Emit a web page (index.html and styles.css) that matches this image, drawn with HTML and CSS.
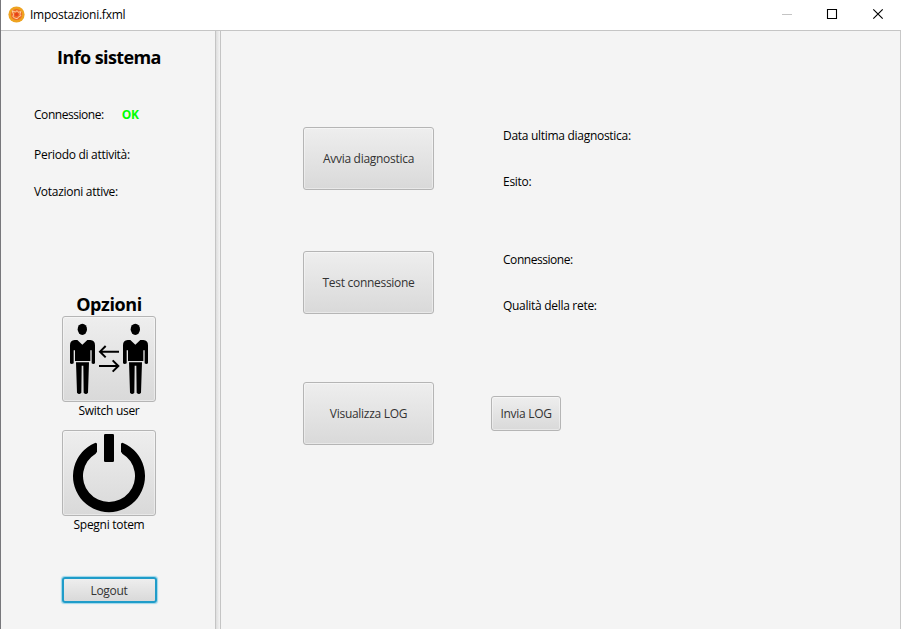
FILE: index.html
```html
<!DOCTYPE html>
<html lang="it">
<head>
<meta charset="utf-8">
<title>Impostazioni.fxml</title>
<link rel="stylesheet" href="styles.css">
</head>
<body>
<div class="window">
  <header class="titlebar">
    <svg class="app-icon" width="17" height="17" viewBox="0 0 17 17">
      <circle cx="8.5" cy="8.5" r="8.1" fill="#eea320"/>
      <circle cx="8.5" cy="8.5" r="5.6" fill="#ef6a24"/>
      <path d="M4.2 4.8l3 1.2 2-1.3 1.2 1.6 2.4-.7-.9 2.6 1 1.5-2.2 1-1.4 2-2.4-.6-2-1.4.6-2.3z" fill="none" stroke="#ffd9b0" stroke-width=".9"/>
      <circle cx="8.5" cy="8.4" r="1.7" fill="#e5401c"/>
    </svg>
    <span class="title">Impostazioni.fxml</span>
    <svg class="controls" width="119" height="30" viewBox="0 0 119 30" fill="none">
      <path d="M0 14.5h10" stroke="#c4c4c4"/>
      <path d="M45.5 9.5h9v9h-9z" stroke="#000" stroke-width="1.1"/>
      <path d="M91.3 9.3l9.4 9.4M100.7 9.3l-9.4 9.4" stroke="#000" stroke-width="1.15"/>
    </svg>
  </header>
  <div class="split">
    <aside class="sidebar">
      <h1 class="heading info-heading">Info sistema</h1>
      <div class="info connection"><span class="conn-label">Connessione:</span><b class="ok">OK</b></div>
      <div class="info activity"><span>Periodo di attività:</span></div>
      <div class="info votes"><span>Votazioni attive:</span></div>
      <h2 class="heading options-heading">Opzioni</h2>
      <button class="button icon-button">
        <svg width="94" height="86" viewBox="36 78 282 258">
          <defs>
            <g id="person">
              <ellipse cx="97" cy="118" rx="14" ry="17"/>
              <path d="M60 220v-54q0-15 14-16h8l15 14 15-14h9q14 1 14 16v54q-5 4-10 0v-39h-4v32H75v-32h-4v39q-6 4-11 0z"/>
              <path d="M78 217h39l-3 91q-6 8-13 0l-1-81h-5l-1 81q-7 8-13 0z"/>
            </g>
          </defs>
          <use href="#person"/>
          <use href="#person" x="159"/>
          <g fill="none" stroke="#000" stroke-width="6">
            <path d="M207 185h-56M167 168l-17 17 17 17"/>
            <path d="M147 228h57M188 211l17 17-17 17"/>
          </g>
        </svg>
      </button>
      <span class="caption">Switch user</span>
      <button class="button icon-button power">
        <svg width="94" height="86" viewBox="36 30 282 258">
          <path d="M135 69Q141 67 141 73V95L137 101A78 78 0 1 0 217 101L213 95V73Q213 67 219 69A108 108 0 1 1 135 69Z"/>
          <rect x="162" y="42" width="30" height="84" rx="4"/>
        </svg>
      </button>
      <span class="caption">Spegni totem</span>
      <button class="button logout">Logout</button>
    </aside>
    <div class="divider"></div>
    <main class="content">
      <section class="row">
        <button class="button action">Avvia diagnostica</button>
        <div class="details"><span>Data ultima diagnostica:</span><span>Esito:</span></div>
      </section>
      <section class="row row-network">
        <button class="button action">Test connessione</button>
        <div class="details"><span class="conn-label">Connessione:</span><span>Qualità della rete:</span></div>
      </section>
      <section class="row row-log">
        <button class="button action">Visualizza LOG</button>
        <button class="button send">Invia LOG</button>
      </section>
    </main>
  </div>
</div>
</body>
</html>
```
FILE: styles.css
```css
* { box-sizing: border-box; }

body {
  margin: 0;
  font: 12px/20px "Open Sans", "Noto Sans", sans-serif;
  letter-spacing: -0.29px;
  color: #000;
  background: #f4f4f4;
}

.window {
  display: flex;
  flex-direction: column;
  width: 901px;
  height: 629px;
  overflow: hidden;
  border-left: 1px solid #77777b;
}

.titlebar {
  display: flex;
  flex: none;
  align-items: center;
  height: 31px;
  padding-left: 7px;
  background: #fff;
  border-bottom: 1px solid #c5c5c5;
}

.app-icon { margin-top: -2px; }
.title { margin-left: 5px; letter-spacing: -0.25px; }
.controls { margin-left: auto; }

.split {
  display: flex;
  flex: 1;
  border-right: 1px solid #c8c8c8;
}

.sidebar {
  display: flex;
  flex-direction: column;
  align-items: center;
  width: 214px;
  padding-left: 2px;
}

.heading {
  margin: 0;
  font-size: 18px;
  line-height: 20px;
  font-weight: 700;
  letter-spacing: -0.6px;
}

.info-heading { margin-top: 16px; }

.info {
  display: flex;
  align-self: stretch;
  height: 20px;
  padding-left: 31px;
}

.conn-label { letter-spacing: -0.45px; }
.connection { margin-top: 38px; }
.activity { margin-top: 20px; }
.votes { margin-top: 17px; }
.ok { margin-left: 18px; color: #0f0; }
.options-heading { margin-top: 92px; letter-spacing: -0.4px; }

.button {
  display: flex;
  flex: none;
  align-items: center;
  justify-content: center;
  padding: 0;
  border: 1px solid #b5b5b5;
  border-radius: 3px;
  background: linear-gradient(#eee, #d9d9d9);
  box-shadow: inset 0 0 0 1px rgba(255, 255, 255, .4);
  color: #333;
  font: inherit;
  letter-spacing: inherit;
}

.icon-button {
  width: 94px;
  height: 86px;
  margin-top: 2px;
}

.icon-button svg { flex: none; }
.caption { height: 18px; line-height: 18px; }
.power { margin-top: 10px; }

.logout {
  width: 95px;
  height: 26px;
  margin-top: 43px;
  padding-top: 1px;
  border: 2px solid #1f9cc9;
  box-shadow: 0 0 1px 0.5px #9bd6ea;
}

.divider {
  width: 6px;
  border: solid #c4c4c4;
  border-width: 0 1px;
  background: linear-gradient(90deg, #ddd, #f4f4f4);
}

.content { flex: 1; padding: 96px 0 0 82px; }
.row { display: flex; height: 63px; }
.row-network { margin-top: 61px; }
.row-log { align-items: center; margin-top: 68px; }
.action { width: 131px; height: 63px; }

.details {
  display: flex;
  flex-direction: column;
  gap: 26px;
  margin: -1px 0 0 69px;
}

.send { width: 70px; height: 35px; margin-left: 57px; }
```
